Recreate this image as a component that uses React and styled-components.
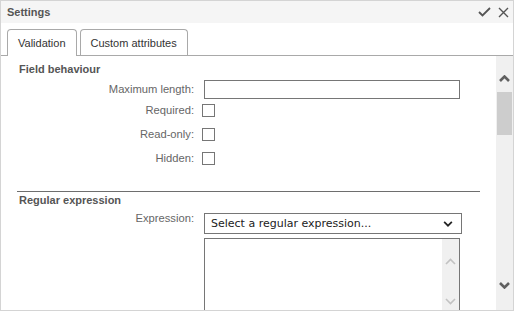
import React from 'react';
import styled, {createGlobalStyle} from 'styled-components';

const GlobalStyle = createGlobalStyle`
  html, body {
    margin: 0;
    padding: 0;
    background: #ffffff;
    font-family: "Liberation Sans", Arial, sans-serif;
  }
`;

const Window = styled.div`
  width: 514px;
  height: 311px;
  box-sizing: border-box;
  border: 1px solid #d4d4d4;
  display: flex;
  flex-direction: column;
  overflow: hidden;
  background: #ffffff;
`;

const Header = styled.div`
  height: 22px;
  flex-shrink: 0;
  background: #f5f5f5;
  display: flex;
  align-items: center;
  justify-content: space-between;
  padding: 0 4px 0 6px;
`;

const Title = styled.span`
  font-size: 11px;
  font-weight: bold;
  color: #555555;
`;

const HeaderTools = styled.div`
  display: flex;
  align-items: center;
  gap: 7px;
`;

const ToolButton = styled.span`
  display: flex;
  color: #555555;
  cursor: pointer;
`;

const TabBar = styled.div`
  flex-shrink: 0;
  display: flex;
  gap: 3px;
  padding: 6px 0 0 6px;
  border-bottom: 1px solid #a9a9a9;
`;

const Tab = styled.div`
  padding: 0 10px;
  display: flex;
  align-items: center;
  font-size: 11px;
  color: #333333;
  border: 1px solid #a9a9a9;
  border-bottom: none;
  border-radius: 4px 4px 0 0;
  background: #ffffff;
  margin-bottom: ${p => (p.$active ? '-1px' : '0')};
  height: ${p => (p.$active ? '26px' : '25px')};
  cursor: pointer;
`;

const Body = styled.div`
  flex: 1;
  display: flex;
  min-height: 0;
`;

const Content = styled.div`
  flex: 1;
  overflow: hidden;
  padding-top: 6px;
`;

const Heading = styled.div`
  font-size: 11px;
  line-height: 14px;
  font-weight: bold;
  color: #555555;
  padding-left: 18px;
`;

const Fields = styled.div`
  margin-top: 4px;
  margin-bottom: 21px;
`;

const Row = styled.div`
  display: flex;
  align-items: center;
  height: ${p => p.$h || 'auto'};
`;

const Label = styled.label`
  width: 193px;
  flex-shrink: 0;
  text-align: right;
  font-size: 11.2px;
  line-height: 13px;
  color: #666666;
`;

const TextInput = styled.div`
  margin-left: 10px;
  width: 256px;
  height: 19px;
  box-sizing: border-box;
  border: 1px solid #767676;
`;

const CheckBox = styled.div`
  margin-left: 8px;
  width: 13px;
  height: 13px;
  box-sizing: border-box;
  border: 1px solid #767676;
  background: #ffffff;
`;

const Rule = styled.div`
  height: 1px;
  background: #6e6e6e;
  margin: 0 16px 1px 16px;
`;

const ExprBlock = styled.div`
  margin-top: 5px;
  display: flex;
`;

const ExprFields = styled.div`
  margin-left: 10px;
  margin-top: 1px;
  display: flex;
  flex-direction: column;
  gap: 4px;
`;

const Select = styled.div`
  width: 258px;
  height: 21px;
  box-sizing: border-box;
  border: 1px solid #767676;
  display: flex;
  align-items: center;
  justify-content: space-between;
  padding: 0 8px 0 6px;
  font-family: "DejaVu Sans", Verdana, sans-serif;
  font-size: 11px;
  color: #222222;
`;

const TextArea = styled.div`
  width: 256px;
  height: 80px;
  box-sizing: border-box;
  border: 1px solid #767676;
  display: flex;
  justify-content: flex-end;
`;

const InnerScroll = styled.div`
  width: 17px;
  background: #f0f0f0;
  display: flex;
  flex-direction: column;
  align-items: center;
  padding-top: 19px;
  gap: 33px;
  color: #c2c2c2;
`;

const ScrollBar = styled.div`
  width: 17px;
  flex-shrink: 0;
  background: #f0f0f0;
  display: flex;
  flex-direction: column;
  align-items: center;
  color: #606060;
`;

const ScrollArrow = styled.div`
  display: flex;
  justify-content: center;
  padding: ${p => p.$pad};
`;

const Thumb = styled.div`
  width: 15px;
  height: 43px;
  background: #cdcdcd;
`;

const Spacer = styled.div`
  flex: 1;
`;

const Chevron = ({up, size = 11, width = 2.2}) => (
  <svg width={size} height={Math.round(size * 0.64)} viewBox="0 0 11 7" fill="none">
    <path
      d={up ? 'M1 6 L5.5 1.5 L10 6' : 'M1 1 L5.5 5.5 L10 1'}
      stroke="currentColor"
      strokeWidth={width}
    />
  </svg>
);

const App = () => (
  <>
    <GlobalStyle />
    <Window>
      <Header>
        <Title>Settings</Title>
        <HeaderTools>
          <ToolButton>
            <svg width="13" height="10" viewBox="0 0 13 10" fill="none">
              <path d="M1 5 L4.5 8.5 L12 1" stroke="currentColor" strokeWidth="1.8" />
            </svg>
          </ToolButton>
          <ToolButton>
            <svg width="11" height="11" viewBox="0 0 11 11" fill="none">
              <path d="M1 1 L10 10 M10 1 L1 10" stroke="currentColor" strokeWidth="1.4" />
            </svg>
          </ToolButton>
        </HeaderTools>
      </Header>

      <TabBar>
        <Tab $active>Validation</Tab>
        <Tab>Custom attributes</Tab>
      </TabBar>

      <Body>
        <Content>
          <Heading>Field behaviour</Heading>
          <Fields>
            <Row $h="19px">
              <Label>Maximum length:</Label>
              <TextInput />
            </Row>
            <Row $h="23px">
              <Label>Required:</Label>
              <CheckBox />
            </Row>
            <Row $h="24px">
              <Label>Read-only:</Label>
              <CheckBox />
            </Row>
            <Row $h="24px">
              <Label>Hidden:</Label>
              <CheckBox />
            </Row>
          </Fields>

          <Rule />
          <Heading>Regular expression</Heading>
          <ExprBlock>
            <Label>Expression:</Label>
            <ExprFields>
              <Select>
                <span>Select a regular expression...</span>
                <Chevron size={10} width={2} />
              </Select>
              <TextArea>
                <InnerScroll>
                  <Chevron up size={11} width={1.6} />
                  <Chevron size={11} width={1.6} />
                </InnerScroll>
              </TextArea>
            </ExprFields>
          </ExprBlock>
        </Content>

        <ScrollBar>
          <ScrollArrow $pad="19px 0 10px">
            <Chevron up size={11} width={2.6} />
          </ScrollArrow>
          <Thumb />
          <Spacer />
          <ScrollArrow $pad="0 0 21px">
            <Chevron size={11} width={2.6} />
          </ScrollArrow>
        </ScrollBar>
      </Body>
    </Window>
  </>
);

export default App;
